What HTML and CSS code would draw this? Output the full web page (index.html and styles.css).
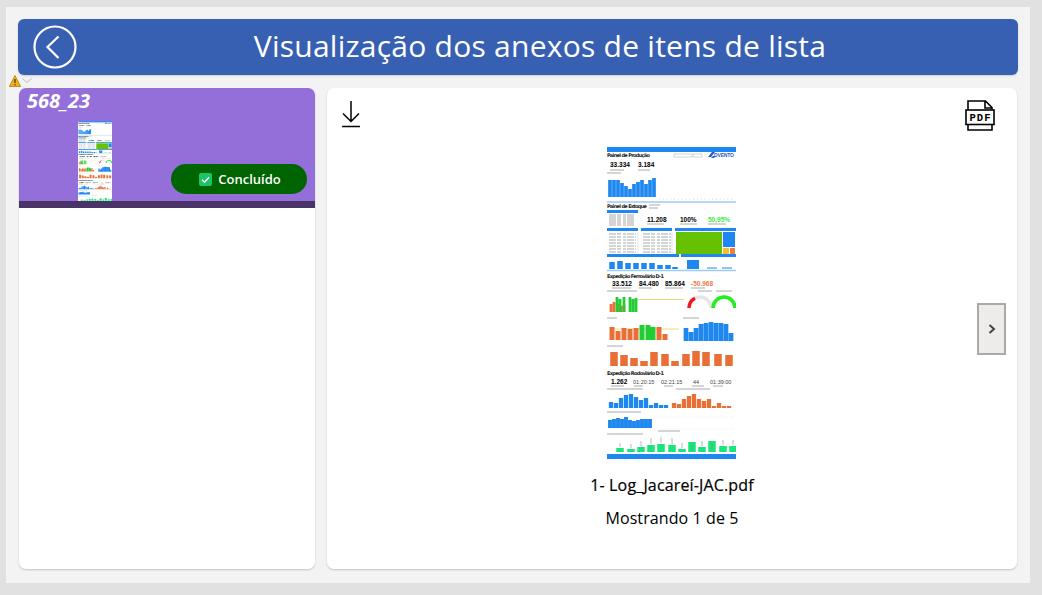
FILE: index.html

```html
<!DOCTYPE html>
<html lang="pt-BR">
<head>
  <meta charset="UTF-8">
  <title>Visualização dos anexos de itens de lista</title>
  <link rel="stylesheet" href="styles.css">
</head>
<body>
  <div class="app">
    <header class="top-bar">
      <svg class="back-icon" viewBox="0 0 44 44" width="44" height="44">
        <circle cx="22" cy="22" r="20.500" fill="none" stroke="#fff" stroke-width="2.200"/>
        <path d="M25.500 11.500 14.500 22 25.500 33" fill="none" stroke="#fff" stroke-width="2.200"/>
      </svg>
      <h1 class="top-title">Visualização dos anexos de itens de lista</h1>
    </header>

    <svg class="warn-icon" viewBox="0 0 12 12" width="12" height="12">
      <path d="M6 .5 11.700 11.500H.3z" fill="#f2b01e" stroke="#a87400" stroke-width=".7"/>
      <path d="M6 4v4M6 9v1.300" stroke="#3a2a00" stroke-width="1.100"/>
    </svg>
    <svg class="warn-chevron" viewBox="0 0 10 5" width="10" height="5">
      <path d="M.5.5 5 4.500 9.500.5" fill="none" stroke="#b4b4b4" stroke-width=".9"/>
    </svg>

    <main class="content">
      <section class="card list-card">
        <div class="item selected">
          <div class="item-name">568_23</div>
          <div class="item-row">
            <!-- same drawing as the large preview -->
            <svg class="item-thumb" viewBox="0 0 130 313" width="34" height="82"><use href="#report"/></svg>
            <div class="status-pill">
              <svg class="check-icon" viewBox="0 0 13 13" width="13" height="13">
                <rect width="13" height="13" rx="2" fill="#1dc46a"/>
                <path d="M3 6.800 5.500 9.200 10 4.300" fill="none" stroke="#fff" stroke-width="1.300"/>
              </svg>
              <span>Concluído</span>
            </div>
          </div>
          <div class="item-band"></div>
        </div>
      </section>

      <section class="card viewer">
        <div class="viewer-tools">
          <svg class="download-icon" viewBox="0 0 20 28" width="20" height="28">
            <path d="M10 1v20M2 13.500 10 21.500 18 13.500M1 26.500h18" fill="none" stroke="#000" stroke-width="1.500"/>
          </svg>
          <svg class="pdf-icon" viewBox="0 0 30 31" width="30" height="31">
            <path d="M3 9.500V1h17.500L27 7.500v2M3 25v5h24v-5M20 1v7h7" fill="none" stroke="#000" stroke-width="1.600"/>
            <rect x="1" y="10" width="28" height="14.500" fill="#fff" stroke="#000" stroke-width="1.600"/>
            <text class="pdf-text" x="15.500" y="21" text-anchor="middle">PDF</text>
          </svg>
        </div>

        <svg class="preview" viewBox="0 0 130 313" width="130" height="313">
          <g id="report">
            <rect width="130" height="313" fill="#fff"/>
            <g fill="#1e88f0">
              <rect x="1" y="0" width="129" height="5"/>
              <rect x="1" y="63" width="31" height="3"/>
              <rect x="1" y="81" width="31" height="3"/>
              <rect x="35" y="81" width="31" height="3"/>
              <rect x="69" y="81" width="61" height="3"/>
              <rect x="1" y="107" width="72" height="3"/>
              <rect x="75" y="107" width="55" height="3"/>
              <rect x="1" y="307" width="129" height="5"/>
            </g>
            <path d="M1 55h129M1 123.500h129" stroke="#9ccbf5" stroke-width="1.500"/>

            <g class="doc-title">
              <text x="1" y="10" textLength="43">Painel de Produção</text>
              <text x="1" y="61" textLength="40">Painel de Estoque</text>
              <text x="1" y="131" textLength="57">Expedição Ferroviário D-1</text>
              <text x="1" y="228" textLength="57">Expedição Rodoviário D-1</text>
            </g>
            <text class="doc-logo" x="108" y="10" textLength="20">DVENTO</text>
            <path d="M102 10l4-5h3l-4 5zM105 11h3l2-2h-3z" fill="#2a5bd0"/>
            <path d="M68 7h18v3H68zM87 7h9v3h-9z" fill="none" stroke="#bbb" stroke-width=".6"/>

            <g class="doc-num">
              <text x="4" y="20">33.334</text>
              <text x="32" y="20">3.184</text>
              <text x="41" y="75">11.208</text>
              <text x="74" y="75">100%</text>
              <text x="102" y="75" fill="#3ee84a">50,95%</text>
              <text x="6" y="139">33.512</text>
              <text x="33" y="139">84.480</text>
              <text x="59" y="139">85.864</text>
              <text x="85" y="139" fill="#f0764a">-50.968</text>
              <text x="5" y="237">1.262</text>
            </g>
            <g class="doc-time">
              <text x="27" y="237">01:20:15</text>
              <text x="55" y="237">02:21:15</text>
              <text x="87" y="237">44</text>
              <text x="104" y="237">01:39:00</text>
            </g>

            <!-- small labels, too small to read in the reference -->
            <path class="doc-label" d="M4 23h14M32 23h12M1 26h14M43 58h11M43 61h9M41 77h17M74 77h17M102 77h18M6 141h19M33 141h13M59 141h18M85 141h14M1 144h30M92 144h14M110 144h16M1 171h10M77 171h16M1 199h16M5 239h13M28 239h9M58 239h9M86 239h12M107 239h10M1 242h36M70 242h34M1 265h34M1 287h36M52 284h22"/>
            <path class="doc-line" d="M3 68h26M3 70h26M3 72h26M3 74h26M3 76h26M3 78h26M3 87h27M3 90h27M3 93h27M3 96h27M3 99h27M3 102h27M3 105h27M37 87h28M37 90h28M37 93h28M37 96h28M37 99h28M37 102h28M37 105h28"/>
            <path d="M32 85v21M66 85v21" stroke="#d8d8d8" stroke-width=".7"/>

            <rect x="70" y="85" width="46" height="22" fill="#66c200"/>
            <rect x="117" y="85" width="12" height="15" fill="#1e88f0"/>
            <rect x="117" y="101" width="6" height="6" fill="#f2c12e"/>
            <rect x="124" y="101" width="5" height="6" fill="#ef7d3b"/>

            <path d="M53 52h75" stroke="#bbb" stroke-width=".8" stroke-dasharray=".8 3"/>
            <path d="M48 282h80M48 270h80" stroke="#ccc" stroke-width=".5" stroke-dasharray=".8 2"/>
            <path d="M32 152.500h46M7 182h66" stroke="#eadc7a" stroke-width="1"/>

            <g class="bars-blue">
              <path stroke-width="3.700" d="M4 50V33M8 50V33M12 50V33M16 50V36M20 50V39M24 50V42M28 50V37M32 50V35M36 50V33M40 50V37M44 50V33M48 50V31"/>
              <path stroke-width="5.500" d="M6 122v-7M14 122v-8M22 122v-6M30 122v-6M38 122v-6M46 122v-6M54 122v-4M62 122v-4M69 122v-2"/>
              <path stroke-width="12" d="M87 122v-9"/>
              <path stroke-width="10" d="M106 122v-2M121 122v-2" opacity=".5"/>
              <path stroke-width="4.700" d="M80 194v-13M85 194v-9M90 194v-13M95 194v-17M100 194v-18M105 194v-19M110 194v-18M115 194v-18M120 194v-17M125 194v-8"/>
              <path stroke-width="4.300" d="M5 261v-6M10 261v-5M15 261v-10M20 261v-13M25 261v-14M30 261v-11M35 261v-8M40 261v-10M45 261v-3M50 261v-5M55 261v-3M60 261v-3"/>
              <path stroke-width="3.900" d="M4 281v-8M8 281v-9M12 281v-10M16 281v-9M20 281v-11M24 281v-8M28 281v-7M32 281v-8M36 281v-9M40 281v-9M44 281v-9"/>
            </g>
            <g class="bars-orange">
              <path stroke-width="2.800" d="M5 165v-8M8 165v-10M12 165v-8M15 165v-6M18 165v-7"/>
              <path stroke-width="5" d="M6 193v-13M12 193v-9M18 193v-12M24 193v-11M30 193v-12M53 193v-13M59 193v-6"/>
              <path stroke-width="7.500" d="M8 219v-14M18 219v-11M28 219v-8M38 219v-5M48 219v-14M59 219v-12M69 219v-5M80 219v-12M90 219v-15M100 219v-14M112 219v-12M123 219v-11"/>
              <path stroke-width="4.300" d="M68 261v-5M73 261v-4M78 261v-9M83 261v-12M88 261v-14M93 261v-9M98 261v-7M103 261v-9M108 261v-2M113 261v-5M118 261v-2M123 261v-2"/>
            </g>
            <g class="bars-green">
              <path stroke-width="2.800" d="M11 165v-15M14 165v-13M18 165v-15M24 165v-15M27 165v-13M30 165v-14"/>
              <path stroke-width="5" d="M36 193v-15M42 193v-15M47 193v-13"/>
            </g>
            <path stroke="#18e67a" fill="none" stroke-width="7.500" d="M14 305v-4M25 305v-3M35 305v-5M45 305v-7M55 305v-8M66 305v-7M76 305v-3M86 305v-10M96 305v-5M106 305v-11M117 305v-6M127 305v-6"/>
            <path d="M14 296v4M25 297v4M35 294v5M45 291v6M55 290v6M66 291v6M76 296v5M86 297v6M96 294v5M106 296v7M117 293v5M127 293v5" stroke="#888" stroke-width=".6"/>

            <!-- gauges -->
            <path d="M83 161a11 11 0 0 1 22 0" fill="none" stroke="#e6e6e6" stroke-width="3.500"/>
            <path d="M83 161a11 11 0 0 1 6-9.800" fill="none" stroke="#f01818" stroke-width="3.500"/>
            <path d="M107 161a11 11 0 0 1 22 0" fill="none" stroke="#22ee22" stroke-width="3.500"/>
          </g>
        </svg>

        <p class="file-name">1- Log_Jacareí-JAC.pdf</p>
        <p class="file-count">Mostrando 1 de 5</p>
        <button class="next-btn" type="button">
          <svg viewBox="0 0 8 10" width="8" height="10"><path d="M1.500 1 6 5 1.500 9" fill="none" stroke="#444" stroke-width="2"/></svg>
        </button>
      </section>
    </main>
  </div>
</body>
</html>
```

FILE: styles.css

```css
* {
  box-sizing: border-box;
}
body {
  margin: 0;
  height: 595px;
  overflow: hidden;
  background-color: #e1e1e1;
  font-family: 'Open Sans', sans-serif;
  color: #000;
}
.app {
  position: relative;
  width: 1024px;
  height: 576px;
  margin: 7px 0 0 6px;
  padding: 12px;
  background-color: #f3f3f3;
}
.top-bar {
  display: flex;
  align-items: center;
  height: 56px;
  padding-left: 15px;
  border-radius: 6px;
  background-color: #3860b2;
  box-shadow: 0 1px 2px rgba(0, 0, 0, 0.15);
}
.back-icon {
  flex: none;
}
.top-title {
  flex: 1;
  margin: 0 0 3px -15px;
  text-align: center;
  font-size: 30px;
  font-weight: 400;
  letter-spacing: 0.25px;
  color: #fff;
}
.warn-icon {
  position: absolute;
  left: 3px;
  top: 68px;
}
.warn-chevron {
  position: absolute;
  left: 16px;
  top: 71px;
}
.content {
  display: flex;
  gap: 12px;
  height: 481px;
  margin: 13px 1px 0 1px;
}
.card {
  border-radius: 7px;
  background-color: #fff;
  box-shadow: 0 1px 2px rgba(0, 0, 0, 0.2);
  overflow: hidden;
}
.list-card {
  width: 296px;
}
.item.selected {
  background-color: #946fd9;
}
.item-name {
  height: 33px;
  padding-left: 8px;
  font-size: 20px;
  line-height: 25px;
  font-weight: 700;
  font-style: italic;
  color: #fff;
}
.item-row {
  display: flex;
  height: 80px;
  padding: 0 8px 0 59px;
  overflow: hidden;
}
.item-thumb {
  display: block;
  flex: none;
}
.status-pill {
  display: flex;
  align-items: center;
  justify-content: center;
  gap: 6px;
  width: 136px;
  height: 30px;
  margin: 43px 0 0 auto;
  padding-left: 2px;
  border-radius: 15px;
  background-color: #006400;
  color: #fff;
  font-size: 13px;
  font-weight: 600;
}
.item-band {
  height: 7px;
  background-color: #4a3366;
}
.viewer {
  position: relative;
  display: flex;
  flex-direction: column;
  align-items: center;
  width: 690px;
}
.viewer-tools {
  display: flex;
  justify-content: space-between;
  width: 100%;
  height: 59px;
  padding: 12px 22px 0 14px;
}
.preview {
  display: block;
  flex: none;
  margin-right: 2px;
}
.pdf-text {
  font-family: 'Liberation Mono', monospace;
  font-size: 10.500px;
  font-weight: 700;
  letter-spacing: 1px;
}
.file-name {
  margin: 14px 0 0;
  font-size: 16px;
  line-height: 22px;
  font-weight: 500;
  letter-spacing: 0.15px;
  -webkit-text-stroke: 0.2px #000;
}
.file-count {
  margin: 11px 0 0;
  font-size: 16px;
  line-height: 22px;
  font-weight: 500;
  letter-spacing: 0.1px;
}
.next-btn {
  position: absolute;
  left: 650px;
  top: 215px;
  display: flex;
  align-items: center;
  justify-content: center;
  width: 29px;
  height: 52px;
  padding: 0;
  border: 2px solid #a9a9a9;
  background-color: #eeeceb;
}

/* report preview */
.doc-title text {
  font-family: 'DejaVu Sans', sans-serif;
  font-size: 5px;
  font-weight: 700;
  fill: #222;
}
.doc-logo {
  font-family: 'Liberation Sans', sans-serif;
  font-size: 5px;
  font-weight: 700;
  fill: #2a5bd0;
}
.doc-num text {
  font-family: 'Liberation Sans', sans-serif;
  font-size: 6.500px;
  font-weight: 700;
}
.doc-time text {
  font-family: 'Liberation Sans', sans-serif;
  font-size: 5.500px;
  fill: #444;
}
.doc-label {
  stroke: #aaa;
  stroke-width: 1;
  fill: none;
}
.doc-line {
  stroke: #aaa;
  stroke-width: 1;
  stroke-dasharray: 7 1 4 2 3 1;
  fill: none;
}
.bars-blue path {
  stroke: #1e88f0;
  fill: none;
}
.bars-orange path {
  stroke: #e86f36;
  fill: none;
}
.bars-green path {
  stroke: #22cc33;
  fill: none;
}
```
